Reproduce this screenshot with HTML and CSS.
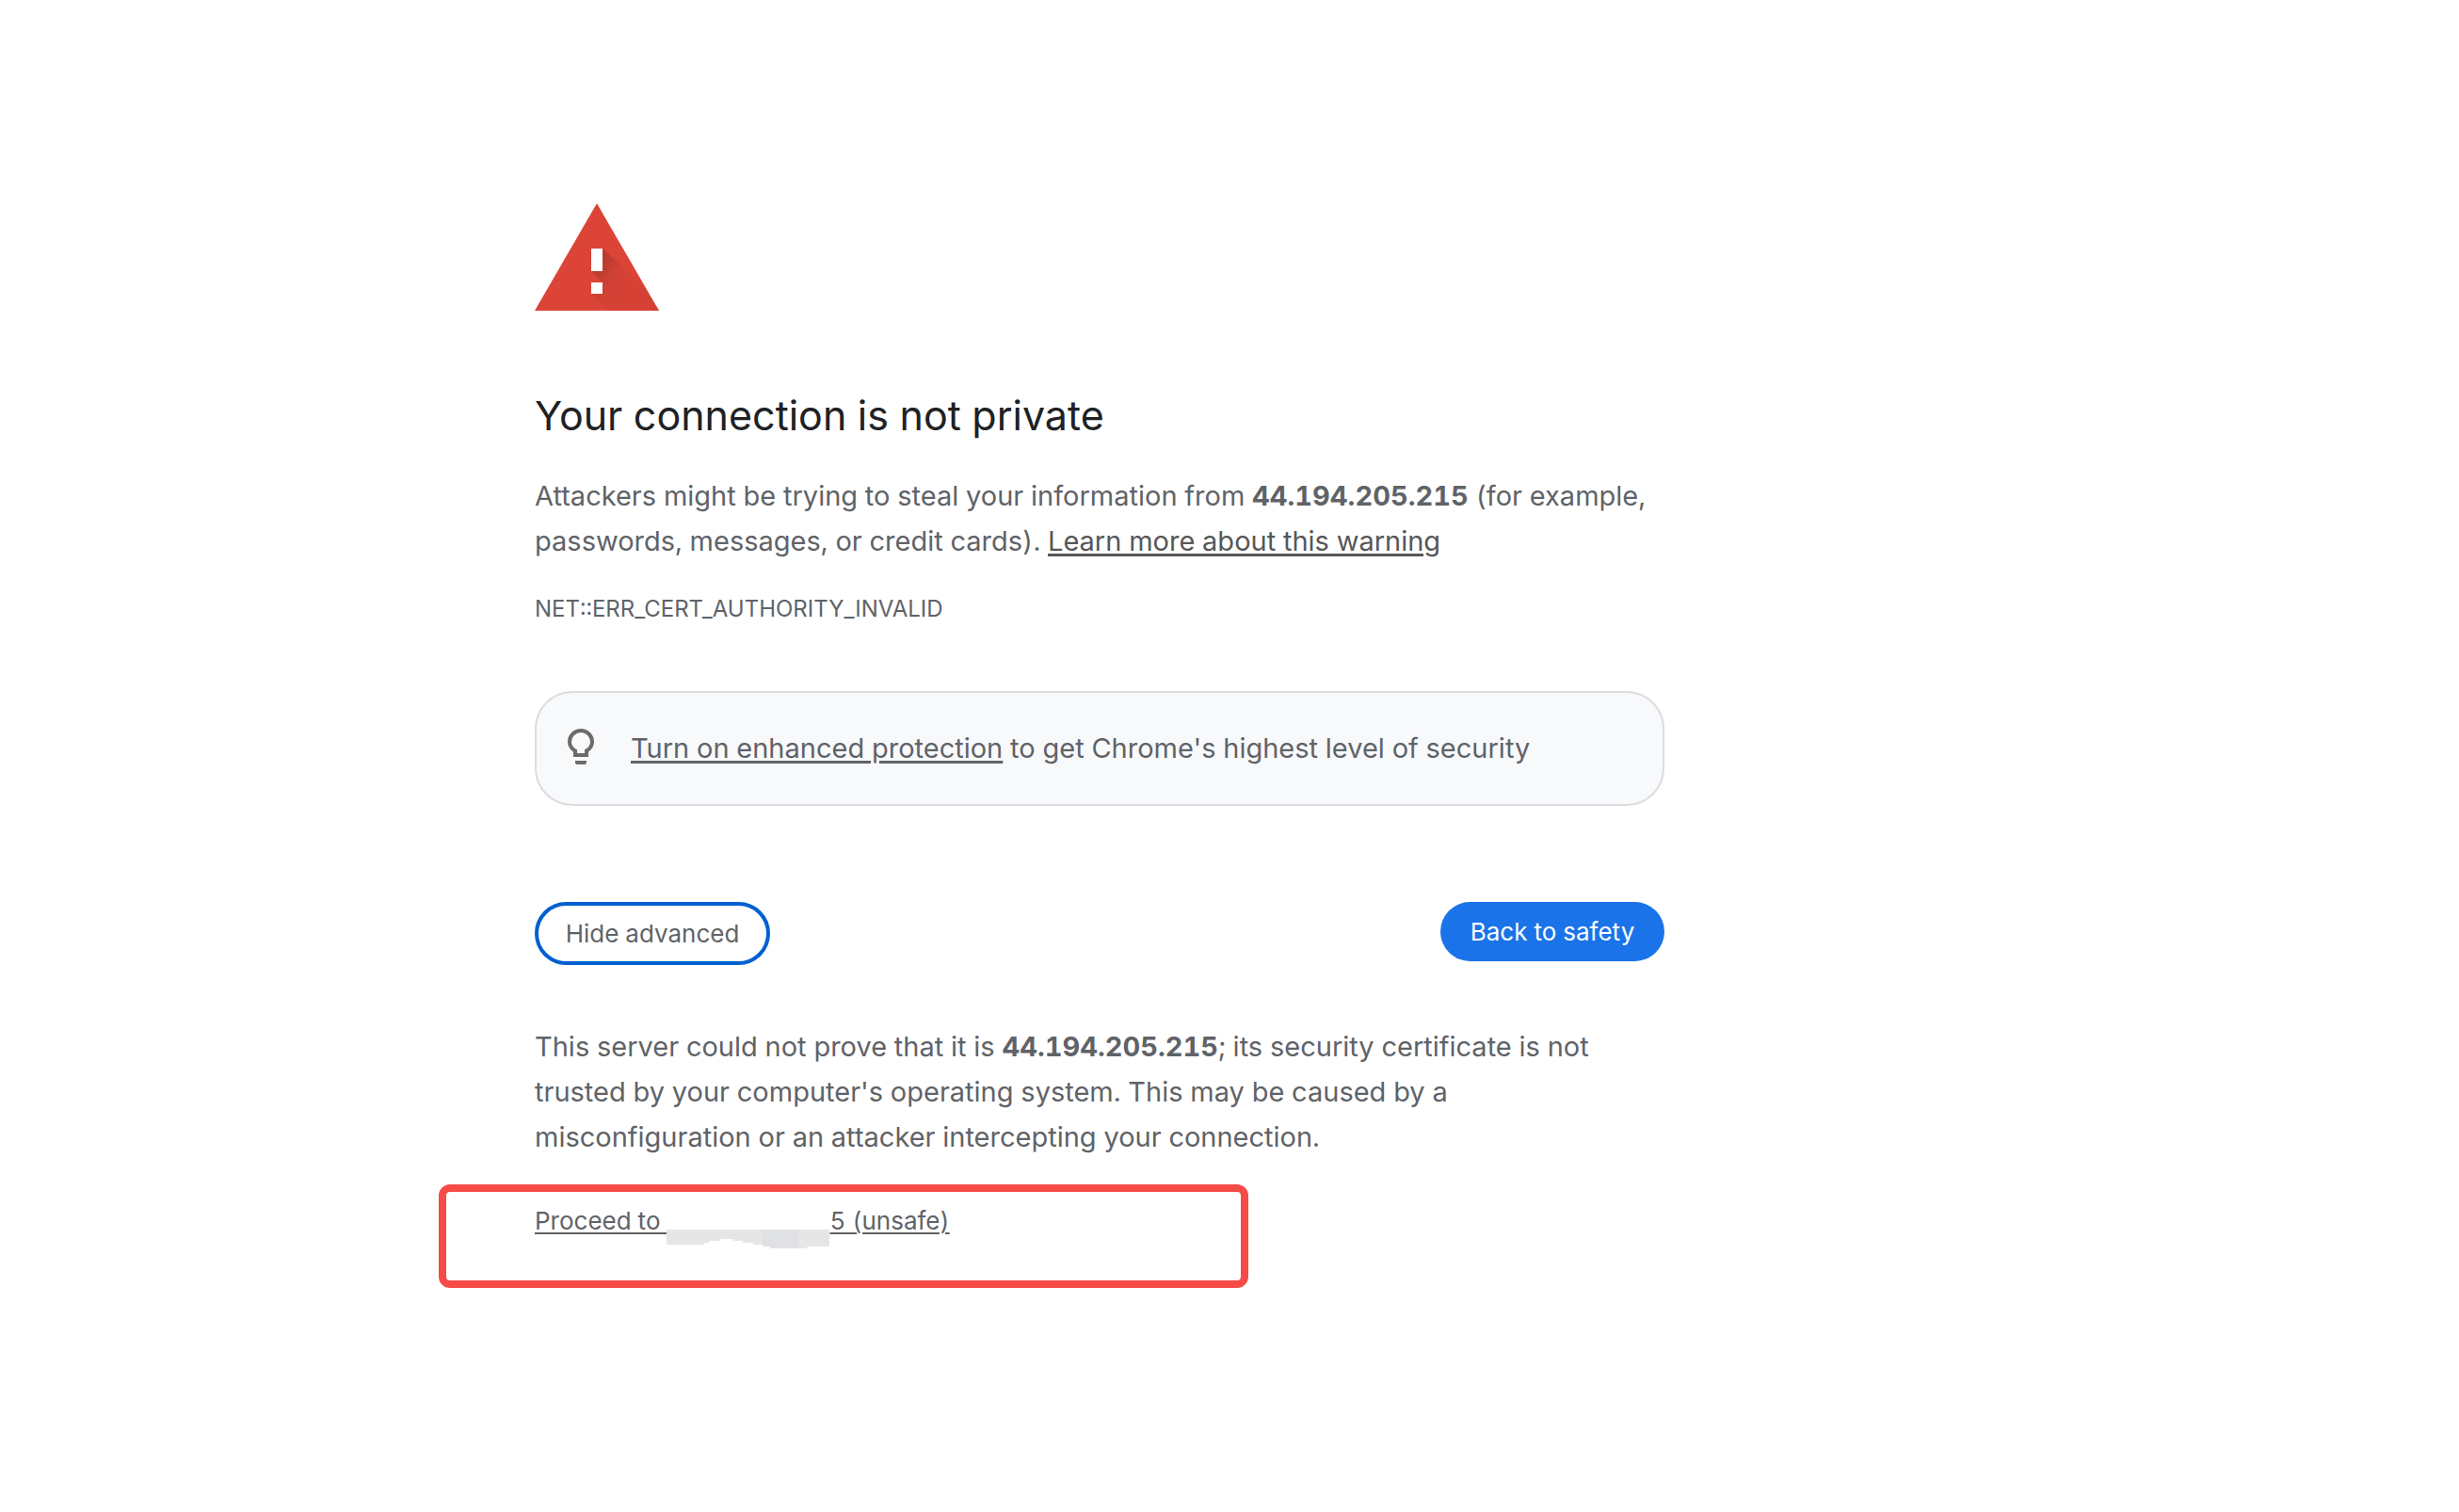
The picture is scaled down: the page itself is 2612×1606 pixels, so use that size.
FILE: index.html
```html
<!DOCTYPE html>
<html lang="en">
<head>
<meta charset="utf-8">
<meta name="viewport" content="width=device-width, initial-scale=1">
<title>Privacy error</title>
<link rel="stylesheet" href="styles.css">
</head>
<body>
<main class="interstitial">
  <svg class="warning-icon" viewBox="0 0 132 114" aria-hidden="true">
    <defs>
      <linearGradient id="shade" gradientUnits="userSpaceOnUse" x1="66" y1="66" x2="90" y2="84">
        <stop offset="0" stop-color="#b93a2e"/>
        <stop offset="0.6" stop-color="#ce4034"/>
        <stop offset="1" stop-color="#d54235"/>
      </linearGradient>
    </defs>
    <path fill="#db4437" d="M66 0l66 114H0z"/>
    <path fill="url(#shade)" d="M72 48l44 41 16 25H78L60 96V84h12L60 72z"/>
    <path fill="#fff" d="M60 48h12v24H60zM60 84h12v12H60z"/>
  </svg>

  <h1 class="title">Your connection is not private</h1>
  <p class="text">Attackers might be trying to steal your information from <strong>44.194.205.215</strong> (for example, passwords, messages, or credit cards). <a class="learn-more" href="#">Learn more about this warning</a></p>
  <p class="error-code">NET::ERR_CERT_AUTHORITY_INVALID</p>

  <div class="promo">
    <svg class="bulb-icon" viewBox="0 0 28 42" aria-hidden="true">
      <path fill="none" stroke="#6b6b6b" stroke-width="4" d="M8 28v-4.500C4.500 21.500 2 18 2 14a12 12 0 0 1 24 0c0 4-2.500 7.500-6 9.500V28z"/>
      <path fill="#6b6b6b" d="M8 34h12v2q0 2-2 2h-8q-2 0-2-2z"/>
    </svg>
    <p class="promo-text"><a href="#">Turn on enhanced protection</a> to get Chrome's highest level of security</p>
  </div>

  <div class="actions">
    <button class="button button-secondary" type="button">Hide advanced</button>
    <button class="button button-primary" type="button">Back to safety</button>
  </div>

  <p class="text details">This server could not prove that it is <strong>44.194.205.215</strong>; its security certificate is not trusted by your computer's operating system. This may be caused by a misconfiguration or an attacker intercepting your connection.</p>

  <div class="highlight">
    <a class="proceed" href="#">Proceed to <span class="redacted"><svg class="smudge" viewBox="0 0 176 20" preserveAspectRatio="none" aria-hidden="true"><path fill="#e6e6e6" d="M0 0h176v18h-24v2h-40v-2h-8v-2h-10v-2H82v-2H72v-2H58v2H46v2h-6v2H0z"/><path fill="#e0e1e4" d="M104 0h38v20h-30v-2h-8z"/></svg></span>5 (unsafe)</a>
  </div>
</main>
</body>
</html>
```

FILE: styles.css
```css
* {
  box-sizing: border-box;
}

body {
  margin: 0;
  background: #fff;
  color: #5f6368;
  font-family: Inter, "Liberation Sans", sans-serif;
  font-size: 29px;
  font-variant-numeric: tabular-nums;
  line-height: 48px;
}

a {
  color: inherit;
  text-decoration-thickness: 3px;
  text-underline-offset: 3px;
}

h1,
p {
  margin: 0;
}

.interstitial {
  max-width: 1768px;
  padding: 216px 0 80px 568px;
}

.warning-icon {
  display: block;
  width: 132px;
  height: 114px;
}

.title {
  margin-top: 79px;
  color: #202124;
  font-size: 43px;
  font-weight: 400;
  line-height: 64px;
}

.text {
  margin-top: 30px;
}

.learn-more {
  color: #575757;
}

.error-code {
  margin-top: 24px;
  font-size: 24px;
  line-height: 48px;
}

.promo {
  display: flex;
  align-items: center;
  gap: 39px;
  margin-top: 63px;
  padding: 35px 33px;
  border: 2px solid #dadce0;
  border-radius: 40px;
  background: #f8f9fb;
}

.bulb-icon {
  flex: none;
  width: 28px;
  height: 42px;
}

.actions {
  display: flex;
  align-items: flex-start;
  justify-content: space-between;
  margin-top: 102px;
}

.button {
  border: 0;
  border-radius: 34px;
  font: inherit;
  font-size: 26px;
  line-height: 32px;
}

.button-secondary {
  width: 250px;
  height: 67px;
  border: 4px solid #0060d0;
  background: #fff;
  color: #5f6368;
}

.button-primary {
  width: 238px;
  height: 63px;
  background: #1a73e8;
  color: #fff;
}

.details {
  margin-top: 63px;
}

.highlight {
  width: 860px;
  height: 110px;
  margin: 26px 0 0 -102px;
  padding: 14px 94px;
  border: 8px solid #f74b47;
  border-radius: 12px;
}

.proceed {
  display: flex;
  font-size: 26px;
  line-height: 34px;
  text-decoration-thickness: 2px;
  white-space: pre;
}

.redacted {
  display: flex;
  align-items: flex-end;
  width: 173px;
  height: 46px;
}

.smudge {
  width: 173px;
  height: 20px;
}
```
